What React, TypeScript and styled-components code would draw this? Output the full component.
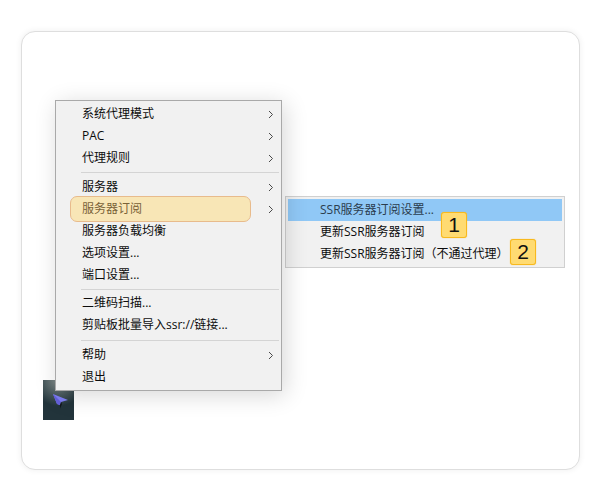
import React from 'react';
import styled, { createGlobalStyle } from 'styled-components';

const GlobalStyle = createGlobalStyle`
    html, body {
        margin: 0;
        padding: 0;
        background: #fff;
    }
    body {
        font-family: "Open Sans", "Noto Sans CJK SC", sans-serif;
    }
`;

const Page = styled.div`
    width: 600px;
    height: 500px;
    box-sizing: border-box;
    padding: 31px 20px 30px 21px;
    overflow: hidden;
`;

const Card = styled.div`
    box-sizing: border-box;
    height: 439px;
    border: 1px solid #dedede;
    border-radius: 14px;
    box-shadow: 0 0 6px rgba(0, 0, 0, 0.07);
    background: #fff;
    padding: 68px 0 0 33px;
    display: flex;
    align-items: flex-start;
    gap: 3px;
    position: relative;
`;

const TrayIcon = styled.div`
    position: absolute;
    left: 21px;
    top: 348px;
    width: 31px;
    height: 40px;
    background: radial-gradient(ellipse 26px 26px at 50% 0, #87908e 0%, #4c5c5f 55%, #22343b 100%) #20323a;
    display: flex;
    align-items: flex-end;
    padding: 0 0 11px 10px;
    box-sizing: border-box;
`;

const MainMenu = styled.div`
    position: relative;
    z-index: 1;
    box-sizing: border-box;
    width: 227px;
    height: 291px;
    padding: 2px;
    background: #f1f1f1;
    border: 1px solid #a9a9a9;
    box-shadow: 3px 4px 22px rgba(0, 0, 0, 0.16);
`;

const SubMenu = styled.div`
    box-sizing: border-box;
    width: 280px;
    height: 72px;
    margin-top: 96px;
    padding: 2px;
    background: #f1f1f1;
    border: 1px solid #d0d0d0;
    position: relative;
`;

const Row = styled.div<{ $active?: boolean; $sub?: boolean }>`
    position: relative;
    height: 22px;
    display: flex;
    align-items: center;
    padding-left: ${(p) => (p.$sub ? '32px' : '24px')};
    font-size: 12px;
    line-height: 22px;
    white-space: nowrap;
    color: ${(p) => (p.$active ? '#2b3d4e' : '#0c0c0c')};
    background: ${(p) => (p.$active ? '#90c8f6' : 'transparent')};
`;

const Chevron = styled.svg`
    position: absolute;
    right: 5px;
    top: 7px;
    width: 6px;
    height: 9px;
    fill: none;
    stroke: #4a4a4a;
    stroke-width: 1;
`;

const Separator = styled.div<{ $above: number; $below: number }>`
    height: 1px;
    margin: ${(p) => p.$above}px 0 ${(p) => p.$below}px 23px;
    background: #d4d4d4;
`;

const Highlight = styled.div`
    position: absolute;
    left: 12px;
    top: -2px;
    width: 181px;
    height: 26px;
    box-sizing: border-box;
    display: flex;
    align-items: center;
    padding-left: 11px;
    font-size: 12px;
    color: #7a6238;
    background: #f8e6b6;
    border: 1px solid #e8bb8c;
    border-radius: 7px;
`;

const Badge = styled.div<{ $left: number; $top: number }>`
    position: absolute;
    left: ${(p) => p.$left}px;
    top: ${(p) => p.$top}px;
    width: 26px;
    height: 26px;
    box-sizing: border-box;
    display: flex;
    align-items: center;
    justify-content: center;
    font-family: "Liberation Sans", sans-serif;
    font-size: 21px;
    color: #111;
    background: #ffdb72;
    border: 1px solid #f8b91e;
    border-radius: 3px;
    box-shadow: 0 0 1px #f8b91e;
`;

const Arrow = () => (
    <Chevron viewBox="0 0 6 9">
        <path d="M1 1 L4.5 4.5 L1 8" />
    </Chevron>
);

function App() {
    return (
        <Page>
            <GlobalStyle />
            <Card>
                <TrayIcon>
                    <svg width="16" height="15" viewBox="0 0 16 15">
                        <path d="M0 0 L15 6 L8 8 L7 11 L4 10 Z" fill="#7f7ff5" />
                        <path d="M0 0 L8 8 L7 11 L4 10 Z" fill="#6460dc" />
                        <path d="M7 14.5 L7 11 L8 8 L9 10 Z" fill="#12161c" />
                    </svg>
                </TrayIcon>
                <MainMenu>
                    <Row>系统代理模式<Arrow /></Row>
                    <Row>PAC<Arrow /></Row>
                    <Row>代理规则<Arrow /></Row>
                    <Separator $above={3} $below={3} />
                    <Row>服务器<Arrow /></Row>
                    <Row>
                        <Highlight>服务器订阅</Highlight>
                        <Arrow />
                    </Row>
                    <Row>服务器负载均衡</Row>
                    <Row>选项设置...</Row>
                    <Row>端口设置...</Row>
                    <Separator $above={3} $below={2} />
                    <Row>二维码扫描...</Row>
                    <Row>剪贴板批量导入ssr://链接...</Row>
                    <Separator $above={4} $below={3} />
                    <Row>帮助<Arrow /></Row>
                    <Row>退出</Row>
                </MainMenu>
                <SubMenu>
                    <Row $sub $active>SSR服务器订阅设置...</Row>
                    <Row $sub>更新SSR服务器订阅</Row>
                    <Row $sub>更新SSR服务器订阅（不通过代理）</Row>
                    <Badge $left={155} $top={15}>1</Badge>
                    <Badge $left={224} $top={42}>2</Badge>
                </SubMenu>
            </Card>
        </Page>
    );
}

export default App;
